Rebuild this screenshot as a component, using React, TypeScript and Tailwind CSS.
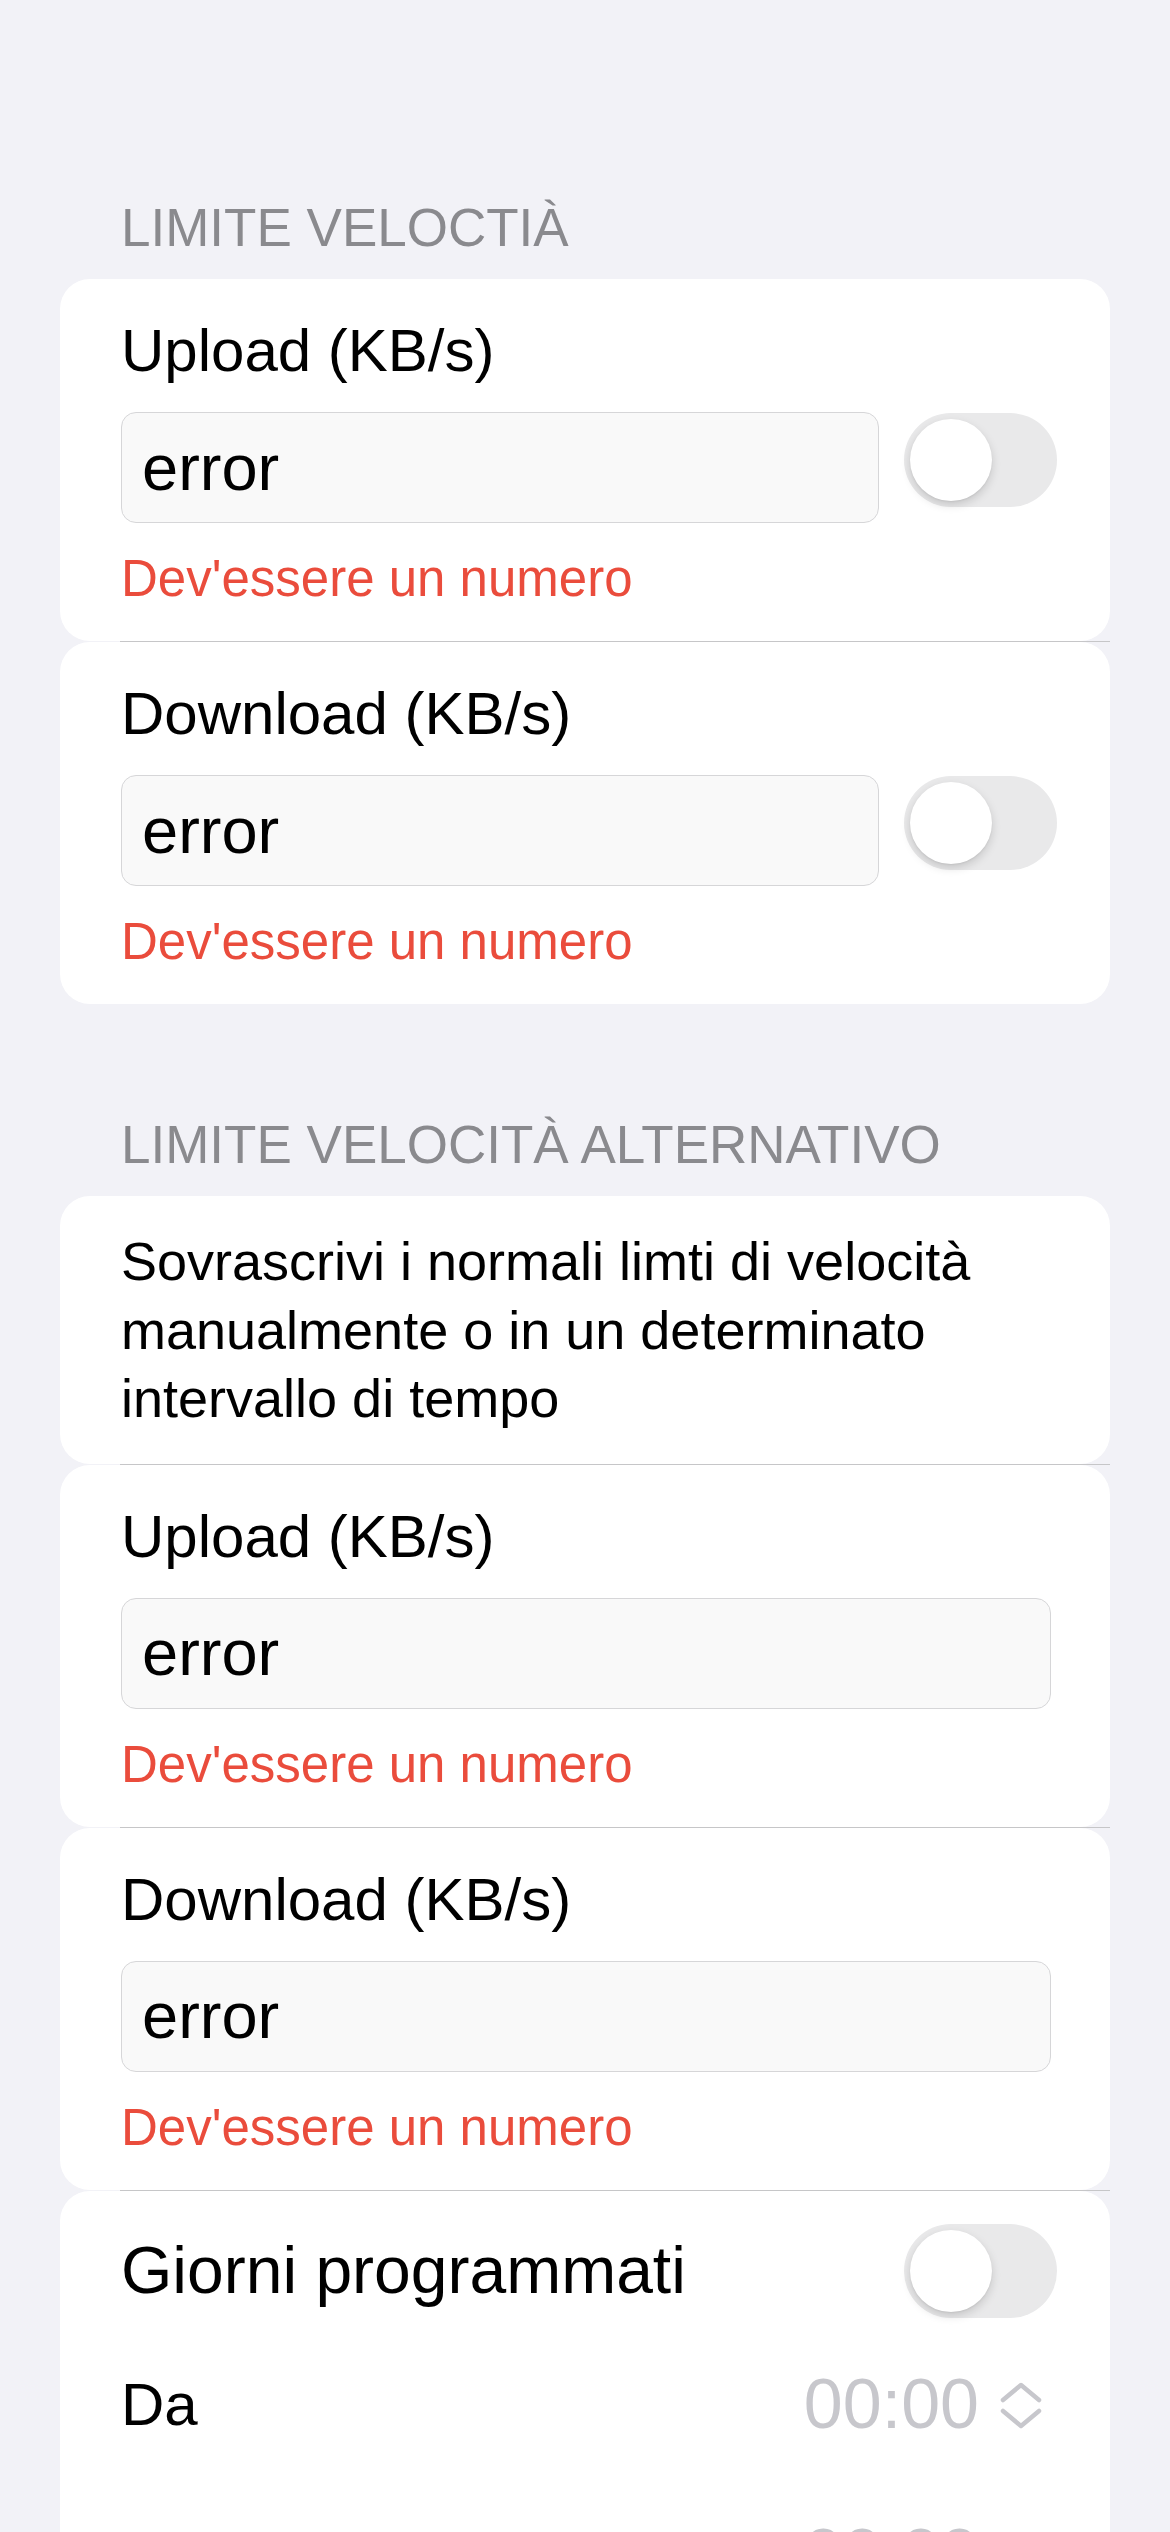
const font = { fontFamily: '"Liberation Sans", Arial, sans-serif' };

function Toggle() {
  return (
    <div className="relative h-[94px] w-[153px] shrink-0 rounded-full bg-[#e9e9ea]">
      <div className="absolute left-[6px] top-[6px] h-[82px] w-[82px] rounded-full bg-white shadow-[0_4px_10px_rgba(0,0,0,0.15),0_1px_2px_rgba(0,0,0,0.06)]" />
    </div>
  );
}

function Separator() {
  return <div className="ml-[60px] h-px bg-[#c6c6c8]" />;
}

function SectionHeader({ children }: { children: React.ReactNode }) {
  return (
    <div className="pl-[121px] text-[53px] leading-[64px] text-[#8a8a8e]">{children}</div>
  );
}

function SpeedField({ label, toggle }: { label: string; toggle?: boolean }) {
  return (
    <div
      className={
        toggle
          ? "rounded-[30px] bg-white pb-[32px] pl-[61px] pr-[53px] pt-[36px]"
          : "rounded-[30px] bg-white pb-[32px] pl-[61px] pr-[59px] pt-[36px]"
      }
    >
      <div className="text-[60px] leading-[72px] text-black">{label}</div>
      <div className="mt-[25px] flex items-start gap-[25px]">
        <div className="flex h-[111px] flex-1 items-center rounded-[15px] border border-[#d6d6d8] bg-[#f9f9f9] px-[20px] text-[65px] text-black">
          error
        </div>
        {toggle && (
          <div className="mt-px">
            <Toggle />
          </div>
        )}
      </div>
      <div className="mt-[26px] text-[51px] leading-[60px] text-[#ea4c3c]">Dev'essere un numero</div>
    </div>
  );
}

function UpDown() {
  return (
    <svg width="44" height="48" viewBox="0 0 44 48" fill="none" className="shrink-0">
      <path d="M4 19 L22 4 L40 19" stroke="#c7c7cc" strokeWidth="4.5" strokeLinecap="round" strokeLinejoin="round" />
      <path d="M4 30 L22 45 L40 30" stroke="#c7c7cc" strokeWidth="4.5" strokeLinecap="round" strokeLinejoin="round" />
    </svg>
  );
}

function TimeRow({ label }: { label: string }) {
  return (
    <div className="flex h-[94px] items-center justify-between">
      <div className="text-[60px] text-black">{label}</div>
      <div className="mr-[14px] flex items-center gap-[20px]">
        <span className="text-[70px] text-[#c7c7cc]">00:00</span>
        <UpDown />
      </div>
    </div>
  );
}

export default function App() {
  return (
    <div className="min-h-[2532px] w-[1170px] overflow-hidden bg-[#f2f2f7] pt-[196px]" style={font}>
      <SectionHeader>LIMITE VELOCTIÀ</SectionHeader>
      <div className="mx-[60px] mt-[19px]">
        <SpeedField label="Upload (KB/s)" toggle />
        <Separator />
        <SpeedField label="Download (KB/s)" toggle />
      </div>

      <div className="mt-[109px]">
        <SectionHeader>LIMITE VELOCITÀ ALTERNATIVO</SectionHeader>
      </div>
      <div className="mx-[60px] mt-[19px]">
        <div className="rounded-[30px] bg-white pb-[31px] pl-[61px] pr-[59px] pt-[31px] text-[54px] leading-[68.5px] text-black">
          Sovrascrivi i normali limti di velocità manualmente o in un determinato intervallo di tempo
        </div>
        <Separator />
        <SpeedField label="Upload (KB/s)" />
        <Separator />
        <SpeedField label="Download (KB/s)" />
        <Separator />
        <div className="rounded-[30px] bg-white pb-[40px] pl-[61px] pr-[53px] pt-[33px]">
          <div className="flex h-[94px] items-center justify-between">
            <div className="text-[66px] text-black">Giorni programmati</div>
            <Toggle />
          </div>
          <div className="mt-[40px]">
            <TimeRow label="Da" />
          </div>
          <div className="mt-[56px]">
            <TimeRow label="A" />
          </div>
        </div>
      </div>
    </div>
  );
}
